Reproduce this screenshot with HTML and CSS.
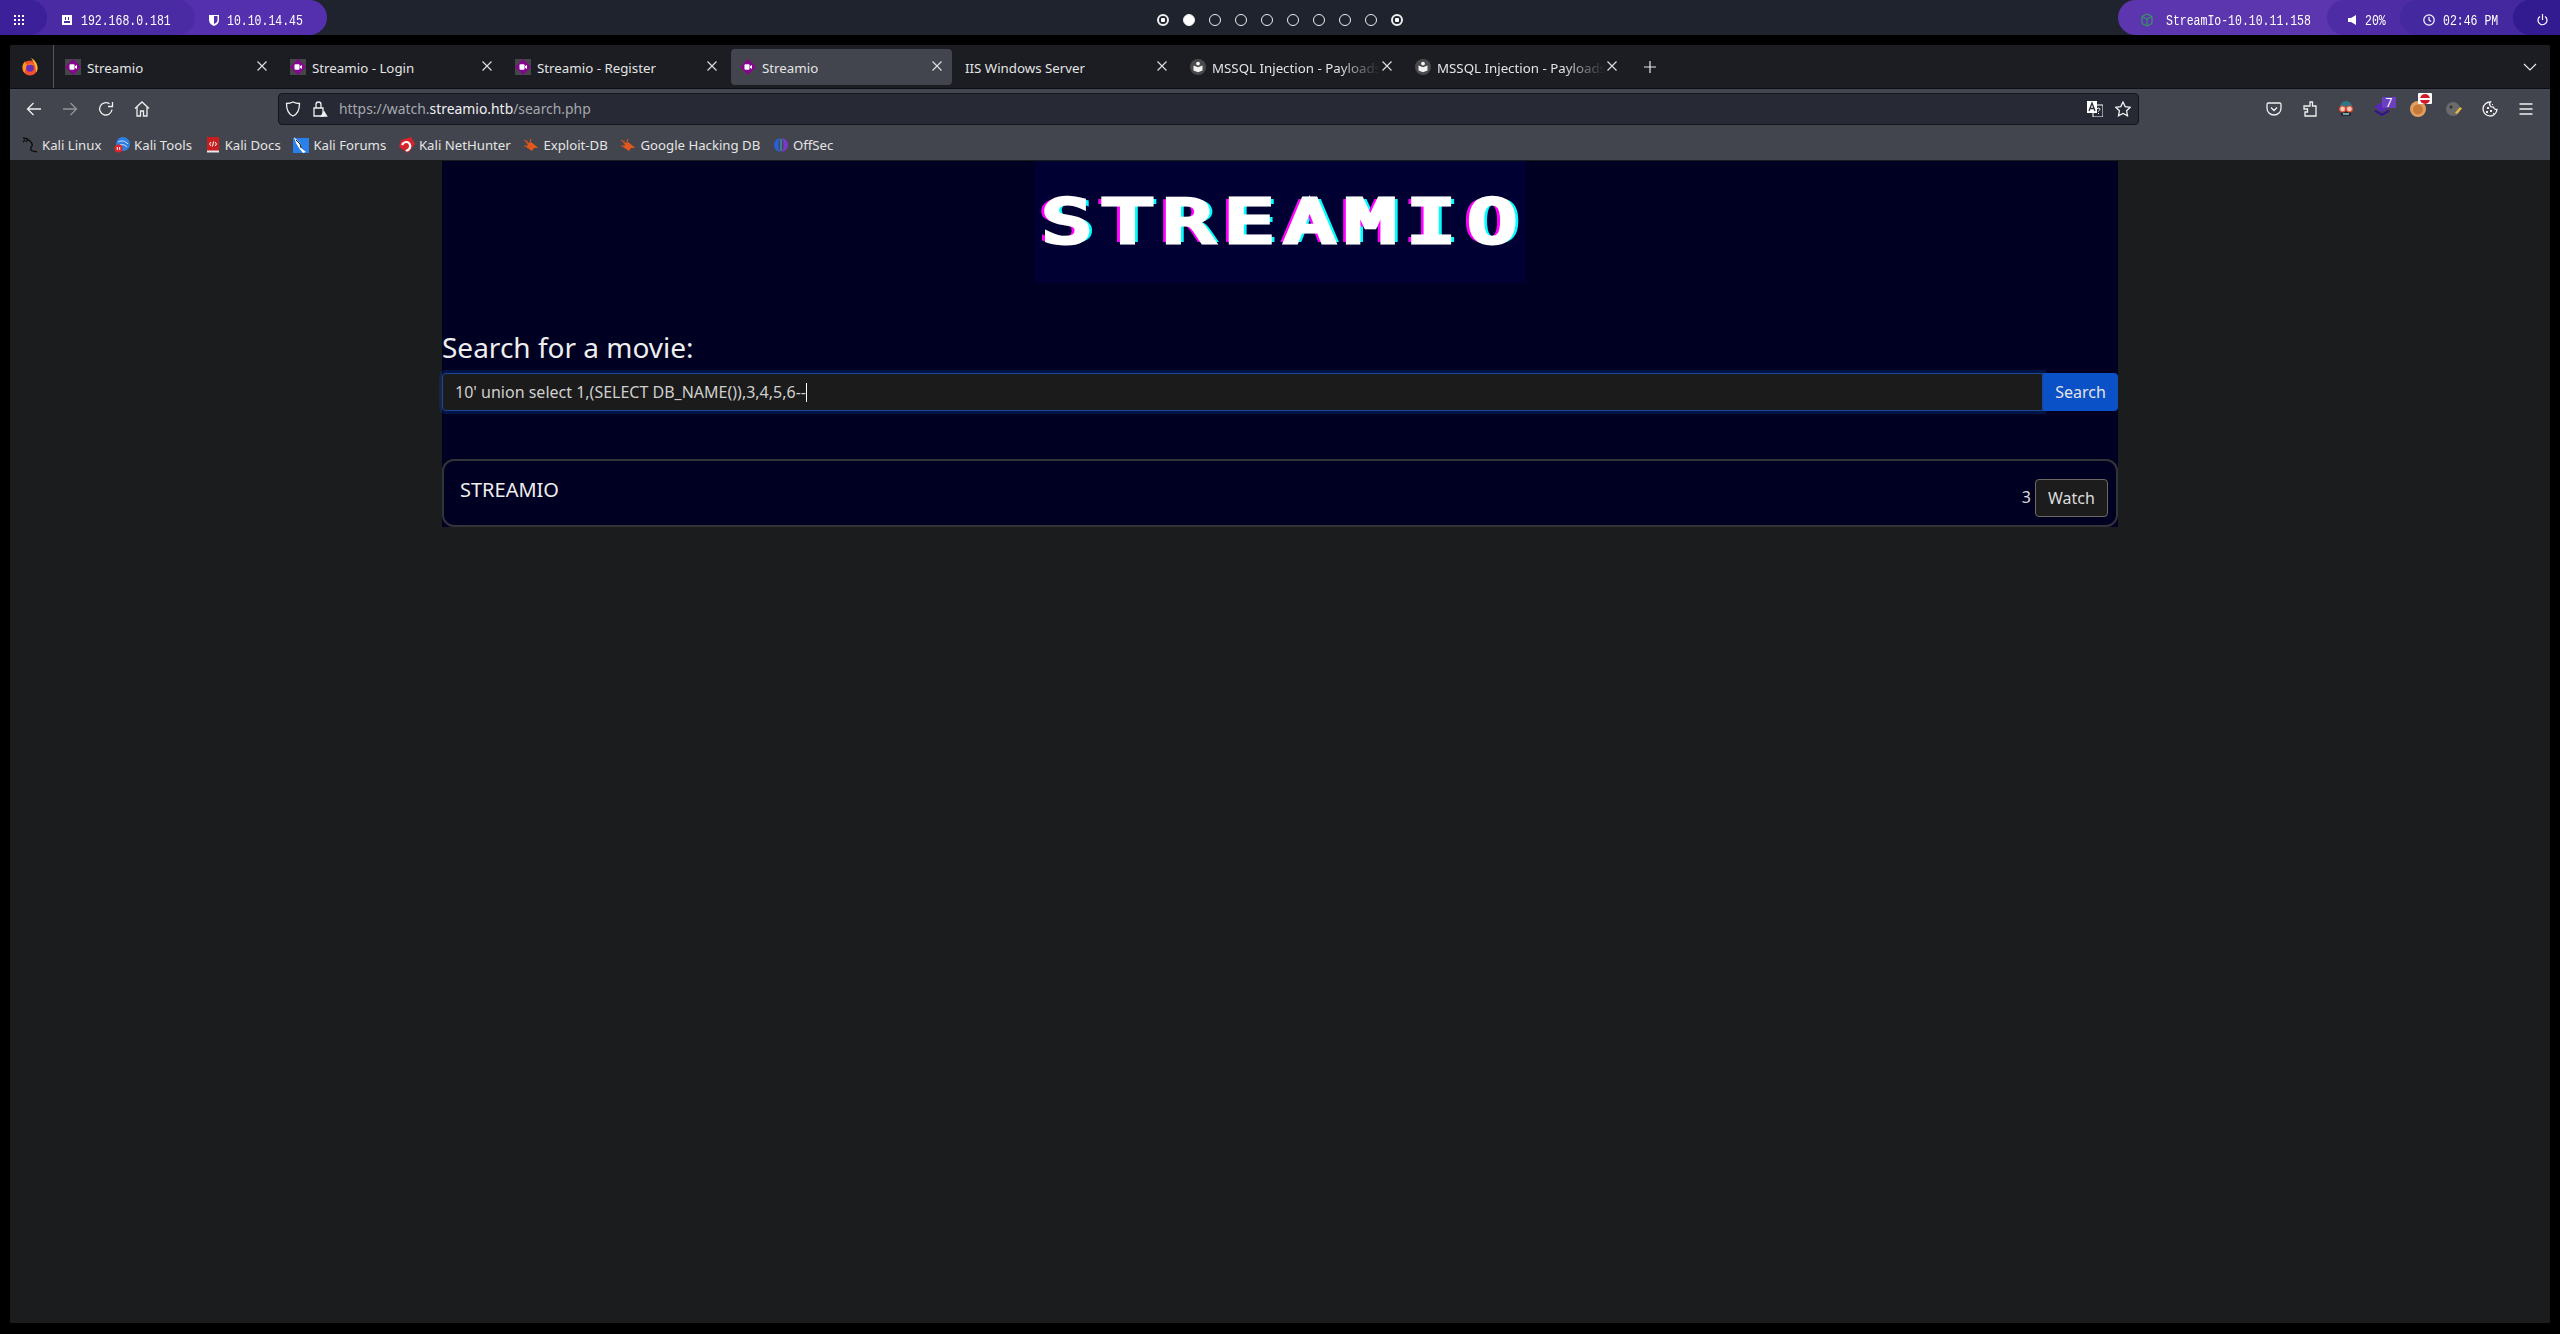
FILE: index.html
```html
<!DOCTYPE html>
<html lang="en">
<head>
    <meta charset="UTF-8">
    <title>Streamio</title>
    <link rel="stylesheet" href="styles.css">
</head>
<body>

<svg class="defs" width="0" height="0">
    <symbol id="streamio" viewBox="0 0 16 16">
        <rect width="16" height="16" fill="#45454a"/>
        <path d="M8 0 16 8 8 16 0 8Z" fill="#84068c"/>
        <rect x="4.5" y="5.2" width="5" height="5.6" rx="1" fill="#fff"/>
        <path d="M10 7.3 12 6v4l-2-1.3Z" fill="#fff"/>
    </symbol>
    <symbol id="payloads" viewBox="0 0 16 16">
        <circle cx="8" cy="8" r="8" fill="#4a4a4c"/>
        <path d="M3.5 6.5 8 8.2l4.5-1.7v5L8 13.2l-4.5-1.7Z" fill="#f2f2f2"/>
        <circle cx="8" cy="4.6" r="1.9" fill="#f2f2f2"/>
    </symbol>
    <symbol id="close" viewBox="0 0 12 12">
        <path d="M1.5 1.5l9 9M10.5 1.5l-9 9" stroke="#e2e2e2" stroke-width="1.1" fill="none"/>
    </symbol>
    <symbol id="bug" viewBox="0 0 16 16">
        <path d="M2 4 5 6 8 5 13 9 15 11 11 11 9 14 6 12 3 10 5 8Z" fill="#e0591c"/>
        <path d="M1 3 5 5M8 2 7 5M1 9h3" stroke="#e0591c" stroke-width="1" fill="none"/>
    </symbol>
</svg>

<header class="topbar">
    <div class="pills pills-left">
        <div class="seg seg-menu">
            <svg width="10" height="10" viewBox="0 0 10 10" fill="#fff"><path d="M0 0h2v2H0zM4 0h2v2H4zM8 0h2v2H8zM0 4h2v2H0zM4 4h2v2H4zM8 4h2v2H8zM0 8h2v2H0zM4 8h2v2H4zM8 8h2v2H8z"/></svg>
        </div>
        <div class="seg seg-ip">
            <svg width="12" height="12" viewBox="0 0 12 12"><path d="M1 1h10v10H1z" fill="#fff"/><path d="M3 7h6v2H3zM4 3h1v3H4zM7 3h1v3H7z" fill="#4a2ba4"/></svg>
            <span>192.168.0.181</span>
        </div>
        <div class="seg seg-vpn">
            <svg width="10" height="12" viewBox="0 0 10 12"><path d="M0 1h10v5c0 3-2 5-5 6-3-1-5-3-5-6Z" fill="#fff"/><path d="M5 2h3.500v4c0 2-1.500 3-3.500 4Z" fill="#5530ae"/></svg>
            <span>10.10.14.45</span>
        </div>
    </div>

    <div class="workspaces">
        <i class="dot dot-ring"></i>
        <i class="dot dot-on"></i>
        <i class="dot"></i>
        <i class="dot"></i>
        <i class="dot"></i>
        <i class="dot"></i>
        <i class="dot"></i>
        <i class="dot"></i>
        <i class="dot"></i>
        <i class="dot dot-ring"></i>
    </div>

    <div class="pills pills-right">
        <div class="seg seg-target">
            <svg width="12" height="14" viewBox="0 0 12 14" fill="none" stroke="#2fa84f" stroke-width="1"><path d="M6 1 11 3.500v7L6 13 1 10.500v-7ZM1 3.500 6 6l5-2.500M6 6v7"/></svg>
            <span>StreamIo-10.10.11.158</span>
        </div>
        <div class="seg seg-volume">
            <svg width="8" height="10" viewBox="0 0 8 10" fill="#fff"><path d="M0 3h3l5-3v10L3 7H0Z"/></svg>
            <span>20%</span>
        </div>
        <div class="seg seg-clock">
            <svg width="12" height="12" viewBox="0 0 12 12" fill="none" stroke="#fff" stroke-width="1.200"><circle cx="6" cy="6" r="5.200"/><path d="M6 3v3l2 1.500"/></svg>
            <span>02:46 PM</span>
        </div>
        <div class="seg seg-power">
            <svg width="11" height="12" viewBox="0 0 11 12" fill="none" stroke="#fff" stroke-width="1.200"><path d="M5.500 0v6M3 2.500a4.500 4.500 0 1 0 5 0"/></svg>
        </div>
    </div>
</header>

<div class="window">
    <div class="tabbar">
        <div class="ff-slot">
            <svg width="16" height="18" viewBox="0 0 16 18">
                <circle cx="8" cy="10" r="7.500" fill="#f0502c"/>
                <path d="M9 0c4 2 7 6 6.500 11-.2 1.500-.8 2.800-1.500 3.500C14 9 12 4 9 0Z" fill="#ffb52c"/>
                <path d="M.5 9c0-2.500 1-4.500 3-6-.5 2 0 3 1.500 3.500L2.500 15C1.200 13.500.5 11.500.5 9Z" fill="#ff9320"/>
                <circle cx="8" cy="10" r="3.800" fill="#6a2fb8"/>
                <path d="M5 7c2-2 5-2 7 0-2-.8-5-.8-7 0Z" fill="#ff9320"/>
            </svg>
        </div>
        <div class="tab">
            <svg class="fav"><use href="#streamio"/></svg>
            <span class="tab-title">Streamio</span>
            <svg class="tab-x"><use href="#close"/></svg>
        </div>
        <div class="tab">
            <svg class="fav"><use href="#streamio"/></svg>
            <span class="tab-title">Streamio - Login</span>
            <svg class="tab-x"><use href="#close"/></svg>
        </div>
        <div class="tab">
            <svg class="fav"><use href="#streamio"/></svg>
            <span class="tab-title">Streamio - Register</span>
            <svg class="tab-x"><use href="#close"/></svg>
        </div>
        <div class="tab tab-active">
            <svg class="fav"><use href="#streamio"/></svg>
            <span class="tab-title">Streamio</span>
            <svg class="tab-x"><use href="#close"/></svg>
        </div>
        <div class="tab">
            <span class="tab-title">IIS Windows Server</span>
            <svg class="tab-x"><use href="#close"/></svg>
        </div>
        <div class="tab">
            <svg class="fav"><use href="#payloads"/></svg>
            <span class="tab-title tab-fade">MSSQL Injection - Payloads</span>
            <svg class="tab-x"><use href="#close"/></svg>
        </div>
        <div class="tab">
            <svg class="fav"><use href="#payloads"/></svg>
            <span class="tab-title tab-fade">MSSQL Injection - Payloads</span>
            <svg class="tab-x"><use href="#close"/></svg>
        </div>
        <svg class="tab-new" width="14" height="14" viewBox="0 0 14 14"><path d="M7 1v12M1 7h12" stroke="#e8e8e8" stroke-width="1.200"/></svg>
        <svg class="tab-list" width="14" height="8" viewBox="0 0 14 8" fill="none"><path d="M1 1l6 6 6-6" stroke="#e8e8e8" stroke-width="1.200"/></svg>
    </div>

    <nav class="navrow">
        <div class="btn">
            <svg class="ico" viewBox="0 0 16 16"><path d="M15 8H1.500M7.500 2 1.500 8l6 6"/></svg>
        </div>
        <div class="btn btn-off">
            <svg class="ico" viewBox="0 0 16 16"><path d="M1 8h13.500M8.500 2l6 6-6 6"/></svg>
        </div>
        <div class="btn">
            <svg class="ico" viewBox="0 0 16 16"><path d="M14 8.500A6.200 6.200 0 1 1 11.500 2.800M14.500 1v4.500H10"/></svg>
        </div>
        <div class="btn">
            <svg class="ico" viewBox="0 0 16 16"><path d="M1 7.500 8 1l7 6.500M3 6v9h3.500v-5h3v5H13V6"/></svg>
        </div>

        <div class="urlbar">
            <svg class="ico" viewBox="0 0 16 16"><path d="M8 1c2 1 4 1.500 6.500 1.500 0 6-1.500 10.500-6.500 12.500C3 13 1.500 8.500 1.500 2.500 4 2.500 6 2 8 1Z"/></svg>
            <svg class="ico ico-lock" viewBox="0 0 16 16">
                <path d="M2 7h9v8H2ZM4 7V3.500a2.500 2.500 0 0 1 5 0V7"/>
                <path class="solid" d="M12 9.500 15.800 15.800H8.200Z"/>
            </svg>
            <span class="url">https://watch.<b>streamio.htb</b>/search.php</span>
            <svg class="url-translate" width="16" height="16" viewBox="0 0 16 16">
                <rect x="6" y="4" width="10" height="12" fill="#272a35" stroke="#fff"/>
                <rect width="10" height="12" fill="#fff"/>
                <path d="M2 10 5 2l3 8M3.200 7.500h3.600" stroke="#272a35" stroke-width="1.300" fill="none"/>
                <path d="M10 8c1-1.500 3-1 3 .3 0 1-1.500 1-1.500 2.200M11.500 12v1" stroke="#fff" fill="none"/>
            </svg>
            <svg class="ico" viewBox="0 0 16 16"><path d="M8 1l2.200 4.600 5 .7-3.600 3.500.9 5L8 12.400l-4.500 2.400.9-5L.8 6.300l5-.7Z"/></svg>
        </div>

        <div class="ext-group">
            <div class="btn">
                <svg class="ico" viewBox="0 0 16 16"><path d="M2.500 2h11A1.500 1.500 0 0 1 15 3.500V7c0 4-3 7-7 7s-7-3-7-7V3.500A1.500 1.500 0 0 1 2.500 2ZM5 6.500 8 9.500l3-3"/></svg>
            </div>
            <div class="btn">
                <svg class="ico" viewBox="0 0 16 16"><path d="M8 1h2.500v4H14v10H3v-4h2.500V8H2V5h6Z"/></svg>
            </div>
            <div class="btn">
                <svg width="16" height="18" viewBox="0 0 16 18">
                    <path d="M2 7a6 6 0 0 1 12 0v4H2Z" fill="#2f7686"/>
                    <path d="M3 11h10v5H3Z" fill="#24282c"/>
                    <path d="M5 13h6v2H5Z" fill="#6fa8b4"/>
                    <circle cx="4.600" cy="9" r="3" fill="#f0c8b8" stroke="#e0482c" stroke-width="1.200"/>
                    <circle cx="11.400" cy="9" r="3" fill="#f0c8b8" stroke="#e0482c" stroke-width="1.200"/>
                </svg>
            </div>
            <div class="btn btn-badged">
                <svg width="16" height="14" viewBox="0 0 16 14">
                    <path d="M8 0 16 5 8 10 0 5Z" fill="#5a28b8"/>
                    <path d="M2 8 8 11.500 14 8 16 9.500 8 14 0 9.500Z" fill="#34148c"/>
                </svg>
                <span class="badge badge-num">7</span>
            </div>
            <div class="btn btn-badged">
                <svg width="16" height="16" viewBox="0 0 16 16">
                    <circle cx="8" cy="8" r="8" fill="#e0a060"/>
                    <circle cx="8" cy="8.500" r="5" fill="#c87a3a"/>
                </svg>
                <span class="badge badge-stop"><i></i></span>
            </div>
            <div class="btn">
                <svg width="16" height="16" viewBox="0 0 16 16">
                    <circle cx="7" cy="8" r="7" fill="#6a6a6a"/>
                    <circle cx="5" cy="6" r="1.500" fill="#333"/>
                    <path d="M9 12 14 6l2 1.500L11 13Z" fill="#e8b840"/>
                </svg>
            </div>
            <div class="btn">
                <svg class="ico" viewBox="0 0 16 16">
                    <path d="M8.500 1A7 7 0 1 0 15 8.500 3 3 0 0 1 11.500 6 3 3 0 0 1 8.500 1Z"/>
                    <path class="solid" d="M5 6h2v2H5zM4 10h2v2H4zM8 9h2v2H8zM11 12h1v1h-1zM10 3h1v1h-1z"/>
                </svg>
            </div>
            <div class="btn">
                <svg class="ico" viewBox="0 0 16 16"><path d="M1.500 3h13M1.500 8h13M1.500 13h13"/></svg>
            </div>
        </div>
    </nav>

    <div class="bookmarks">
        <div class="bm">
            <svg class="bm-ico" viewBox="0 0 16 16" fill="none" stroke="#0c0c0c" stroke-width="1.300"><path d="M1 1c3 0 5 1 7 3s3 3 2 5-2 2-1 4 4 1 6 2M3 3 1 5M6 2 4 5"/></svg>
            <span>Kali Linux</span>
        </div>
        <div class="bm">
            <svg class="bm-ico" viewBox="0 0 16 16"><circle cx="9" cy="7" r="7" fill="#2f7fe0"/><path d="M4 5c4-2 7-1 10 2M6 8c3-1 5 0 7 2" stroke="#cfe4ff" fill="none"/><circle cx="4.500" cy="11.500" r="4" fill="#e0242a"/><path d="M3.300 10v3M5.700 10v3" stroke="#fff"/></svg>
            <span>Kali Tools</span>
        </div>
        <div class="bm">
            <svg class="bm-ico" viewBox="0 0 16 16"><rect x="2" y="0" width="12" height="15" fill="#c81e1e"/><rect x="2" y="13.500" width="12" height="2" fill="#e8e8e8"/><path d="M6 5 4.500 7 6 9M10 5l1.500 2L10 9M8.500 4.500l-1 5" stroke="#fff" fill="none"/></svg>
            <span>Kali Docs</span>
        </div>
        <div class="bm">
            <svg class="bm-ico" viewBox="0 0 16 16"><rect y="1" width="16" height="15" fill="#2a80e8"/><path d="M1 0 7 6l1 5 5 4-3 1-4-5-3-5Z" fill="#fff"/><path d="M3 3l4 4 1 4" stroke="#222" fill="none"/></svg>
            <span>Kali Forums</span>
        </div>
        <div class="bm">
            <svg class="bm-ico" viewBox="0 0 16 16"><path d="M2 3 12 0 16 7 9 16 0 10Z" fill="#d8232a"/><path d="M3 8c2-4 7-4 8 0s-3 6-4 5" stroke="#fff" stroke-width="2.200" fill="none"/></svg>
            <span>Kali NetHunter</span>
        </div>
        <div class="bm">
            <svg class="bm-ico"><use href="#bug"/></svg>
            <span>Exploit-DB</span>
        </div>
        <div class="bm">
            <svg class="bm-ico"><use href="#bug"/></svg>
            <span>Google Hacking DB</span>
        </div>
        <div class="bm">
            <svg class="bm-ico" viewBox="0 0 16 16"><path d="M7 1C3 2 1 5 1 8s2 6 6 7C5 11 5 5 7 1Z" fill="#2a5fd8"/><path d="M9 1c4 1 6 4 6 7s-2 6-6 7c2-4 2-10 0-14Z" fill="#7a3ac8"/><path d="M8 2v12" stroke="#38b8e8"/></svg>
            <span>OffSec</span>
        </div>
    </div>

    <main class="page">
        <div class="content">
            <div class="logo-box">
                <span class="logo">STREAMIO</span>
            </div>

            <h3 class="search-title">Search for a movie:</h3>
            <form class="search-form">
                <div class="search-input">10' union select 1,(SELECT DB_NAME()),3,4,5,6--<i class="caret"></i></div>
                <button type="button" class="search-btn">Search</button>
            </form>

            <div class="movie">
                <h5 class="movie-title">STREAMIO</h5>
                <div class="movie-side">
                    <span class="movie-num">3</span>
                    <button type="button" class="watch-btn">Watch</button>
                </div>
            </div>
        </div>
    </main>
</div>

</body>
</html>
```

FILE: styles.css
```css
* {
    box-sizing: border-box;
}
html, body {
    height: 100%;
}
body {
    margin: 0;
    height: 1334px;
    overflow: hidden;
    background: #000;
    font-family: "Noto Sans", sans-serif;
    color: #e4e4e4;
}
.defs {
    position: absolute;
}

/* top status bar */
.topbar {
    height: 35px;
    background: #1f232d;
    display: flex;
    justify-content: space-between;
    font-family: "Liberation Mono", monospace;
    font-size: 11.5px;
    color: #fff;
    position: relative;
}
.pills {
    display: flex;
}
.seg {
    height: 35px;
    padding-top: 5px;
    display: flex;
    align-items: center;
    gap: 8px;
}
.seg span {
    transform: scaleY(1.25);
}
.pills-left .seg {
    border-radius: 0 18px 18px 0;
    margin-left: -18px;
}
.pills-left .seg-menu {
    width: 47px;
    background: #3c209a;
    z-index: 3;
    margin-left: 0;
    padding-left: 14px;
}
.seg-ip {
    width: 166px;
    background: #4a2ba4;
    padding-left: 32px;
    z-index: 2;
}
.seg-vpn {
    width: 150px;
    background: #5530ae;
    padding-left: 32px;
    z-index: 1;
}
.pills-right .seg {
    border-radius: 18px 0 0 18px;
    margin-left: -18px;
}
.pills-right .seg-target {
    width: 227px;
    background: #5c36ae;
    margin-left: 0;
    padding-left: 23px;
    gap: 13px;
}
.seg-volume {
    width: 91px;
    background: #4d2ca6;
    padding-left: 21px;
    gap: 9px;
}
.seg-clock {
    width: 131px;
    background: #44289f;
    padding-left: 23px;
    gap: 8px;
}
.seg-power {
    width: 47px;
    background: #321a90;
    padding-left: 24px;
}
.workspaces {
    position: absolute;
    left: 1157px;
    top: 14px;
    display: flex;
    gap: 14px;
}
.dot {
    width: 12px;
    height: 12px;
    border-radius: 50%;
    border: 1.3px solid #eee;
    display: block;
}
.dot-on {
    background: #fff;
}
.dot-ring {
    border-width: 2px;
    background: radial-gradient(circle, #fff 0 2px, transparent 2.5px);
}

/* browser window */
.window {
    margin: 10px 10px 0;
    height: 1278px;
    display: flex;
    flex-direction: column;
    background: #1a1c1d;
}
.tabbar {
    height: 44px;
    background: #1b1d22;
    border-bottom: 1px solid #0e0f12;
    display: flex;
    font-size: 13.3px;
    flex: none;
}
.ff-slot {
    width: 44px;
    border-right: 1px solid #55575c;
    display: flex;
    align-items: center;
    padding-left: 12px;
}
.tab {
    width: 221px;
    height: 36px;
    margin: 4px 2px 0;
    border-radius: 4px;
    padding: 0 9px 0 9px;
    display: flex;
    align-items: center;
    flex: none;
}
.tab-active {
    background: #42454d;
}
.fav {
    width: 16px;
    height: 16px;
    flex: none;
    margin-right: 6px;
}
.tab-title {
    white-space: nowrap;
    overflow: hidden;
    padding-top: 1px;
}
.tab-fade {
    width: 168px;
    -webkit-mask-image: linear-gradient(to right, #000 75%, transparent);
    mask-image: linear-gradient(to right, #000 75%, transparent);
}
.tab-x {
    width: 12px;
    height: 12px;
    margin-left: auto;
    margin-top: -2px;
    flex: none;
}
.tab-new {
    margin: 15px 0 0 14px;
    flex: none;
}
.tab-list {
    margin: 18px 13px 0 auto;
    flex: none;
}

/* toolbar */
.navrow {
    height: 40px;
    background: #42454d;
    display: flex;
    align-items: center;
    padding-left: 6px;
    flex: none;
}
.btn {
    width: 36px;
    height: 32px;
    flex: none;
    display: flex;
    align-items: center;
    justify-content: center;
    position: relative;
}
.btn-off {
    opacity: .45;
}
.ico {
    width: 16px;
    height: 16px;
    fill: none;
    stroke: #f0f0f0;
    stroke-width: 1.3;
    flex: none;
}
.ico .solid {
    fill: #f0f0f0;
    stroke: none;
}
.urlbar {
    width: 1861px;
    height: 32px;
    margin-left: 118px;
    background: #272a35;
    border: 1px solid #15161a;
    border-radius: 4px;
    display: flex;
    align-items: center;
    padding: 0 7px 0 6px;
    flex: none;
}
.ico-lock {
    margin-left: 11px;
}
.url {
    margin-left: 11px;
    padding-bottom: 2px;
    font-size: 13.9px;
    color: #a6a8ad;
}
.url b {
    font-weight: 400;
    color: #f0f0f0;
}
.url-translate {
    margin-left: auto;
    margin-right: 12px;
    flex: none;
}
.ext-group {
    display: flex;
    margin-left: 117px;
}
.badge {
    position: absolute;
    font-size: 12px;
    line-height: 11px;
}
.badge-num {
    top: 4px;
    left: 18px;
    width: 14px;
    height: 11px;
    background: #6a3fc0;
    border-radius: 1px;
    text-align: center;
    color: #fff;
}
.badge-stop {
    top: 0;
    left: 18px;
    width: 14px;
    height: 11px;
    background: #fff;
    border-radius: 1px;
    display: flex;
    align-items: center;
    justify-content: center;
}
.badge-stop i {
    width: 10px;
    height: 10px;
    border-radius: 50%;
    background: linear-gradient(#d01c28 0 40%, #fff 40% 60%, #d01c28 60%);
}

/* bookmarks */
.bookmarks {
    height: 32px;
    background: #42454d;
    border-bottom: 1px solid #1a1b1f;
    padding-left: 12px;
    display: flex;
    align-items: center;
    gap: 12.7px;
    font-size: 13.2px;
    flex: none;
}
.bm {
    display: flex;
    align-items: center;
    gap: 4px;
}
.bm-ico {
    width: 16px;
    height: 16px;
    flex: none;
}

/* page */
.page {
    flex: 1;
    background: #1a1c1d;
}
.content {
    width: 1676px;
    margin: 0 auto;
    background: #000023;
}
.logo-box {
    width: 491px;
    height: 122px;
    margin: 0 auto;
    background: #000033;
    display: flex;
    align-items: center;
    justify-content: center;
}
.logo {
    font-family: "DejaVu Sans Mono", monospace;
    font-weight: 400;
    font-size: 58px;
    line-height: 1;
    letter-spacing: 8.5px;
    padding-left: 8px;
    color: #fff;
    white-space: nowrap;
    transform: scaleX(1.4);
    -webkit-text-stroke: 5px #fff;
    text-shadow: -4.5px 0 #f0f, 4.5px 0 #0ff;
}
.search-title {
    margin: 48px 0 8px;
    font-size: 28px;
    font-weight: 400;
    line-height: 33.6px;
    color: #eee;
}
.search-form {
    display: flex;
    height: 38px;
    margin: 0;
}
.search-input {
    flex: 1;
    background: #1b1b1b;
    border: 1px solid #1a4a94;
    border-radius: 4px 0 0 4px;
    box-shadow: 0 0 0 3px rgba(13, 83, 200, .22);
    padding: 0 12px;
    font-size: 16px;
    line-height: 36px;
    color: #cfcfcf;
    white-space: nowrap;
}
.caret {
    display: inline-block;
    width: 1px;
    height: 19px;
    background: #fff;
    vertical-align: -4px;
}
.search-btn {
    width: 75px;
    border: none;
    border-radius: 0 4px 4px 0;
    background: #0a50c6;
    color: #e4e4e4;
    font: 16px "Noto Sans", sans-serif;
    padding: 0;
    position: relative;
}
.movie {
    margin-top: 48px;
    height: 68px;
    border: 2px solid #333438;
    border-radius: 12px;
    padding: 18px 8px 8px 16px;
    display: flex;
    justify-content: space-between;
}
.movie-title {
    margin: -1px 0 0;
    font-size: 20px;
    font-weight: 400;
    line-height: 24px;
    color: #eee;
}
.movie-side {
    display: flex;
    align-items: center;
    gap: 4px;
}
.movie-num {
    font-size: 16px;
    color: #ddd;
    margin-top: -2px;
}
.watch-btn {
    width: 73px;
    height: 38px;
    background: #1c1c1c;
    border: 1px solid #6e6a62;
    border-radius: 4px;
    color: #ddd;
    font: 16px "Noto Sans", sans-serif;
    padding: 0;
}
```
